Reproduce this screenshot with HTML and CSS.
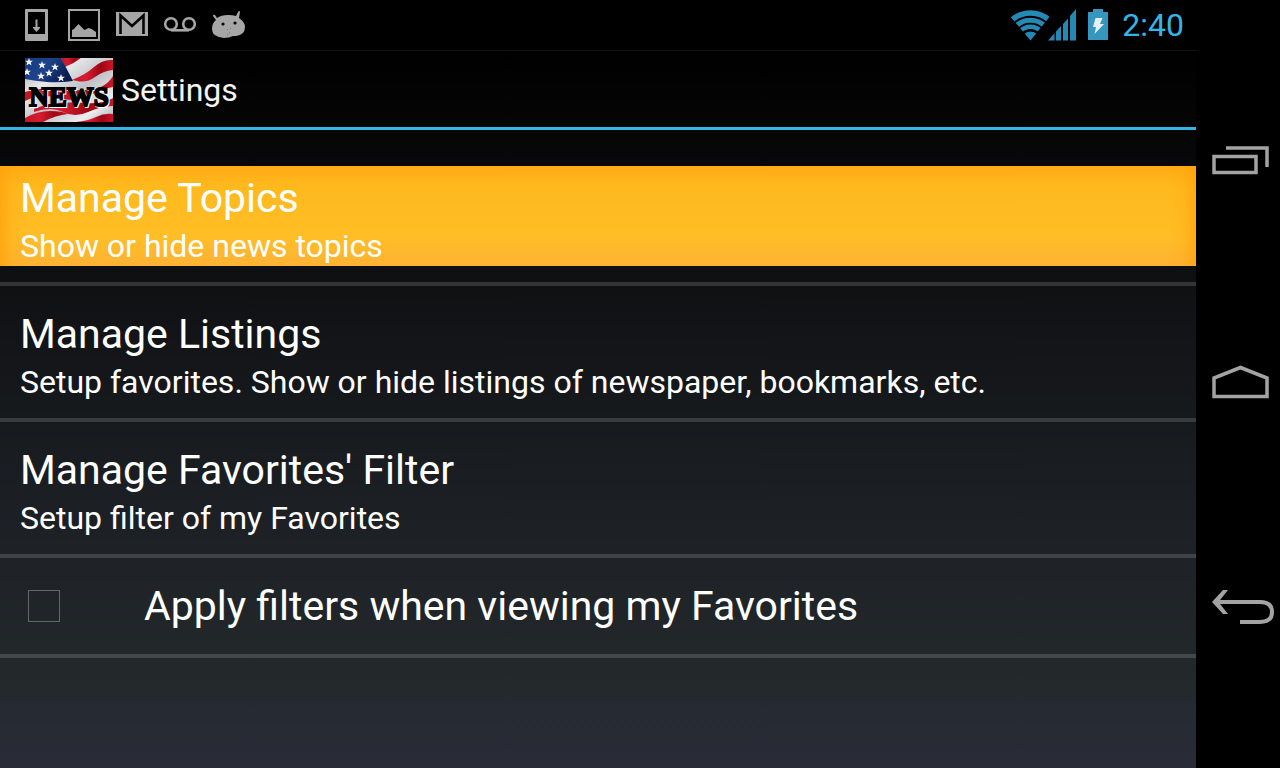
FILE: index.html
```html
<!DOCTYPE html>
<html lang="en">
<head>
<meta charset="utf-8">
<title>Settings</title>
<link rel="stylesheet" href="styles.css">
</head>
<body>
<div class="device">
  <div class="screen">
    <div class="status-bar">
      <div class="notifications">
        <svg class="status-icon" viewBox="0 0 36 36" aria-label="Download"><path fill="#a6a6a6" fill-rule="evenodd" d="M8 2h21q1 0 1 1v30q0 1-1 1H8q-1 0-1-1V3q0-1 1-1zm2 3v22h17V5z"/><path fill="#a6a6a6" d="M17.500 12.500h2V20H22v1l-3.500 4-3.500-4v-1h2.500z"/></svg>
        <svg class="status-icon" viewBox="0 0 36 36" aria-label="Screenshot"><path d="M3 3h30v30H3z" fill="none" stroke="#a6a6a6" stroke-width="2"/><path fill="#a6a6a6" d="M6 30v-7l2-1 4.500-5 6 6 4-2 3 1 4.500 3v5z"/></svg>
        <svg class="status-icon" viewBox="0 0 36 36" aria-label="Mail"><path fill="#a6a6a6" d="M2 5h32v24H2z"/><path d="M6.500 27V8.500L18 19 29.500 8.500V27" fill="none" stroke="#050505" stroke-width="2.600"/></svg>
        <svg class="status-icon" viewBox="0 0 36 36" aria-label="Voicemail"><g fill="none" stroke="#a6a6a6" stroke-width="2.600"><circle cx="9" cy="17" r="5.800"/><circle cx="27" cy="17" r="5.800"/><path d="M9 23.300h18"/></g></svg>
        <svg class="status-icon" viewBox="0 0 36 36" aria-label="Android"><path fill="#a6a6a6" d="M7 11q4-3 11-3 5 0 8 1l2-4q2-2 2 0l-1 6q6 4 6 9 0 8-9 9h-3q-4 2-9 2-12-1-12-9 0-6 4-9L3 9q0-2 2-1z"/><circle cx="13" cy="17" r="1.600"/><circle cx="25" cy="16" r="1.600"/><path fill="#777" d="M17 22h1v1h-1zm3-1h1v1h-1zm-1 4h1v1h-1zm-2 2h1v1h-1z"/></svg>
      </div>
      <div class="system">
        <svg class="system-icons" viewBox="0 0 100 36" aria-label="Wi-Fi, signal and charging">
          <defs><clipPath id="wifi"><path d="M-1 8V0h42v8L20.500 33.500z"/></clipPath></defs>
          <g clip-path="url(#wifi)" fill="none" stroke="#2489b5"><circle cx="20.500" cy="34" r="28" stroke-width="5.500"/><circle cx="20.500" cy="34" r="20.800" stroke-width="5"/><circle cx="20.500" cy="34" r="14.300" stroke-width="4.500"/><circle cx="20.500" cy="34" r="9.500" fill="#2489b5" stroke="none"/></g>
          <path fill="#2489b5" d="M38 33.500l6.500-7.200v7.200zM46 24.600l5-5.500v14.400h-5zM53 16.900l5-5.500v22.100h-5zM60 9.100L66 2v31.500h-6z"/>
          <path fill="#3796bd" d="M83 2h10v3h5v28H78V5h5z"/><path fill="#e3f0f6" d="M85.500 11h7l-2.500 6h4l-9.500 10 1.500-7h-3z"/>
        </svg>
        <time class="clock">2:40</time>
      </div>
    </div>
    <header class="action-bar">
      <svg class="app-logo" viewBox="0 0 88 64" aria-label="News">
        <defs>
          <linearGradient id="cloth" x2="1" y2="1"><stop offset="0" stop-color="#999da8"/><stop offset=".3" stop-color="#e9e9ec"/><stop offset=".55" stop-color="#bfc1c6"/><stop offset=".8" stop-color="#ededef"/><stop offset="1" stop-color="#a9abb2"/></linearGradient>
          <linearGradient id="red" x2="1"><stop offset="0" stop-color="#c01725"/><stop offset=".35" stop-color="#d51c30"/><stop offset=".7" stop-color="#9d0713"/><stop offset="1" stop-color="#cb1528"/></linearGradient>
          <linearGradient id="blue" x2="1" y2=".4"><stop offset="0" stop-color="#123c7c"/><stop offset=".5" stop-color="#1e438c"/><stop offset="1" stop-color="#0a1c50"/></linearGradient>
          <path id="star" d="M0-4l1 2.700h3L1.700.5l.9 3L0 1.800l-2.600 1.700.9-3L-4-1.300h3z"/>
        </defs>
        <path fill="url(#cloth)" d="M0 0h88v64H0z"/>
        <g fill="url(#red)">
          <path d="M36 0h20Q48 6 40 9z"/>
          <path d="M47 22Q60 17 69 9T88 2v10q-10 1-18 7t-18 4z"/>
          <path d="M0 34q16-5 31-3t32 1 25-14v11q-12 2-24 9t-30 2-34 3z"/>
          <path d="M9 51q12-5 24-6t29 0 26-5v8q-12 0-25 6t-25 0-29 0z"/>
          <path d="M0 60q12-7 25-7t18 3q-12 1-25 8H0z"/>
          <path d="M51 64q12-1 20-5t17-3v8z"/>
        </g>
        <path fill="url(#blue)" d="M0 0h36l12 23Q34 25 22 24T0 21z"/>
        <g fill="#f4f6fb"><use href="#star" x="4" y="4"/><use href="#star" x="17" y="7"/><use href="#star" x="30" y="9"/><use href="#star" x="2" y="14"/><use href="#star" x="16" y="18"/><use href="#star" x="24" y="15"/><use href="#star" x="36" y="20"/></g>
        <text class="logo-text logo-shadow" x="45" y="49" text-anchor="middle">NEWS</text>
        <text class="logo-text" x="44" y="48" text-anchor="middle">NEWS</text>
      </svg>
      <h1 class="page-title">Settings</h1>
    </header>
    <main>
      <ul class="settings">
        <li class="setting"><button type="button" class="entry entry-pressed"><span class="entry-title">Manage Topics</span><span class="entry-summary">Show or hide news topics</span></button></li>
        <li class="setting"><button type="button" class="entry"><span class="entry-title">Manage Listings</span><span class="entry-summary">Setup favorites. Show or hide listings of newspaper, bookmarks, etc.</span></button></li>
        <li class="setting"><button type="button" class="entry"><span class="entry-title">Manage Favorites' Filter</span><span class="entry-summary">Setup filter of my Favorites</span></button></li>
        <li class="setting setting-check"><input class="check" type="checkbox" id="apply-filters"><label class="entry-title" for="apply-filters">Apply filters when viewing my Favorites</label></li>
      </ul>
    </main>
  </div>
  <nav class="nav-bar" aria-label="System navigation">
    <button type="button" class="nav-button" aria-label="Recent apps"><svg class="nav-icon" viewBox="0 0 64 40"><path d="M2 16.500h42v16H2zM14 8h41v19" fill="none" stroke="#a3a3a3" stroke-width="3.500"/></svg></button>
    <button type="button" class="nav-button" aria-label="Home"><svg class="nav-icon" viewBox="0 0 64 40"><path d="M2 32.500V14L28.500 3.500 55 14v18.500z" fill="none" stroke="#a3a3a3" stroke-width="3.500"/></svg></button>
    <button type="button" class="nav-button" aria-label="Back"><svg class="nav-icon" viewBox="0 0 64 40"><path d="M2 14h46q12 0 12 10t-12 10H28" fill="none" stroke="#a3a3a3" stroke-width="4"/><path fill="#a3a3a3" d="M11 2h5L6.500 14 16 26h-5L0 14z"/></svg></button>
  </nav>
</div>
</body>
</html>
```
FILE: styles.css
```css
* {
  box-sizing: border-box;
}

body {
  margin: 0;
  background: #000;
  color: #fff;
  font-family: Roboto, "Noto Sans", sans-serif;
}

.device {
  display: flex;
  min-height: 100vh;
}

.screen {
  flex: 1;
  min-width: 0;
  background: linear-gradient(#000 50px, #0e0f11 260px, #1c2024 510px, #24292c 690px, #262a33 710px, #292c36 100%);
}

.status-bar {
  display: flex;
  align-items: center;
  justify-content: space-between;
  height: 51px;
  padding: 0 12px 0 18px;
  background: #000;
  border-bottom: 1px solid #141414;
}

.notifications {
  display: flex;
  gap: 12px;
}

.status-icon {
  width: 36px;
  height: 36px;
}

.system {
  display: flex;
  align-items: center;
  gap: 12px;
}

.system-icons {
  width: 100px;
  height: 36px;
}

.clock {
  color: #33b5e5;
  font-size: 32px;
  line-height: 40px;
}

.action-bar {
  display: flex;
  align-items: center;
  gap: 8px;
  height: 79px;
  padding: 2px 0 0 25px;
  border-bottom: 3px solid #33b5e5;
}

.app-logo {
  width: 88px;
  height: 64px;
}

.logo-text {
  font-family: "Liberation Serif", serif;
  font-size: 27px;
  font-weight: 700;
  fill: #000;
  stroke: #000;
  stroke-width: 2px;
}

.logo-shadow {
  fill: #fff;
  stroke: #fff;
}

.page-title {
  margin: 0;
  color: #f3f3f3;
  font-size: 32px;
  font-weight: 400;
  line-height: 40px;
}

.settings {
  margin: 0;
  padding: 20px 0 0;
  list-style: none;
}

.setting {
  padding: 16px 0;
  border-bottom: 4px solid rgba(255, 255, 255, 0.15);
}

.entry {
  display: flex;
  flex-direction: column;
  gap: 4px;
  width: 100%;
  padding: 8px 20px 0;
  border: 0;
  background: none;
  color: inherit;
  font-family: inherit;
  text-align: left;
}

.entry-pressed {
  background:
    linear-gradient(90deg, rgba(255, 160, 10, 0.7), rgba(255, 160, 10, 0.2) 12px, rgba(255, 160, 10, 0) 28px),
    linear-gradient(270deg, rgba(255, 160, 10, 0.7), rgba(255, 160, 10, 0.2) 12px, rgba(255, 160, 10, 0) 28px),
    linear-gradient(#ffaa14, #ffb91d 20px, #ffbe26 70px, #ffb234);
}

.entry-title {
  font-size: 41px;
  line-height: 48px;
}

.entry-summary {
  font-size: 32px;
  line-height: 40px;
}

.setting-check {
  display: flex;
  align-items: center;
  gap: 84px;
  padding: 24px 28px;
}

.check {
  appearance: none;
  flex: none;
  width: 32px;
  height: 32px;
  margin: 0;
  border: 1px solid #64676a;
}

.check:checked {
  background: #33b5e5;
}

.nav-bar {
  display: flex;
  flex-direction: column;
  justify-content: center;
  width: 84px;
  background: #000;
}

.nav-button {
  display: flex;
  align-items: center;
  justify-content: flex-end;
  height: 224px;
  padding: 0 4px 0 0;
  border: 0;
  background: none;
}

.nav-icon {
  width: 64px;
  height: 40px;
}
```
